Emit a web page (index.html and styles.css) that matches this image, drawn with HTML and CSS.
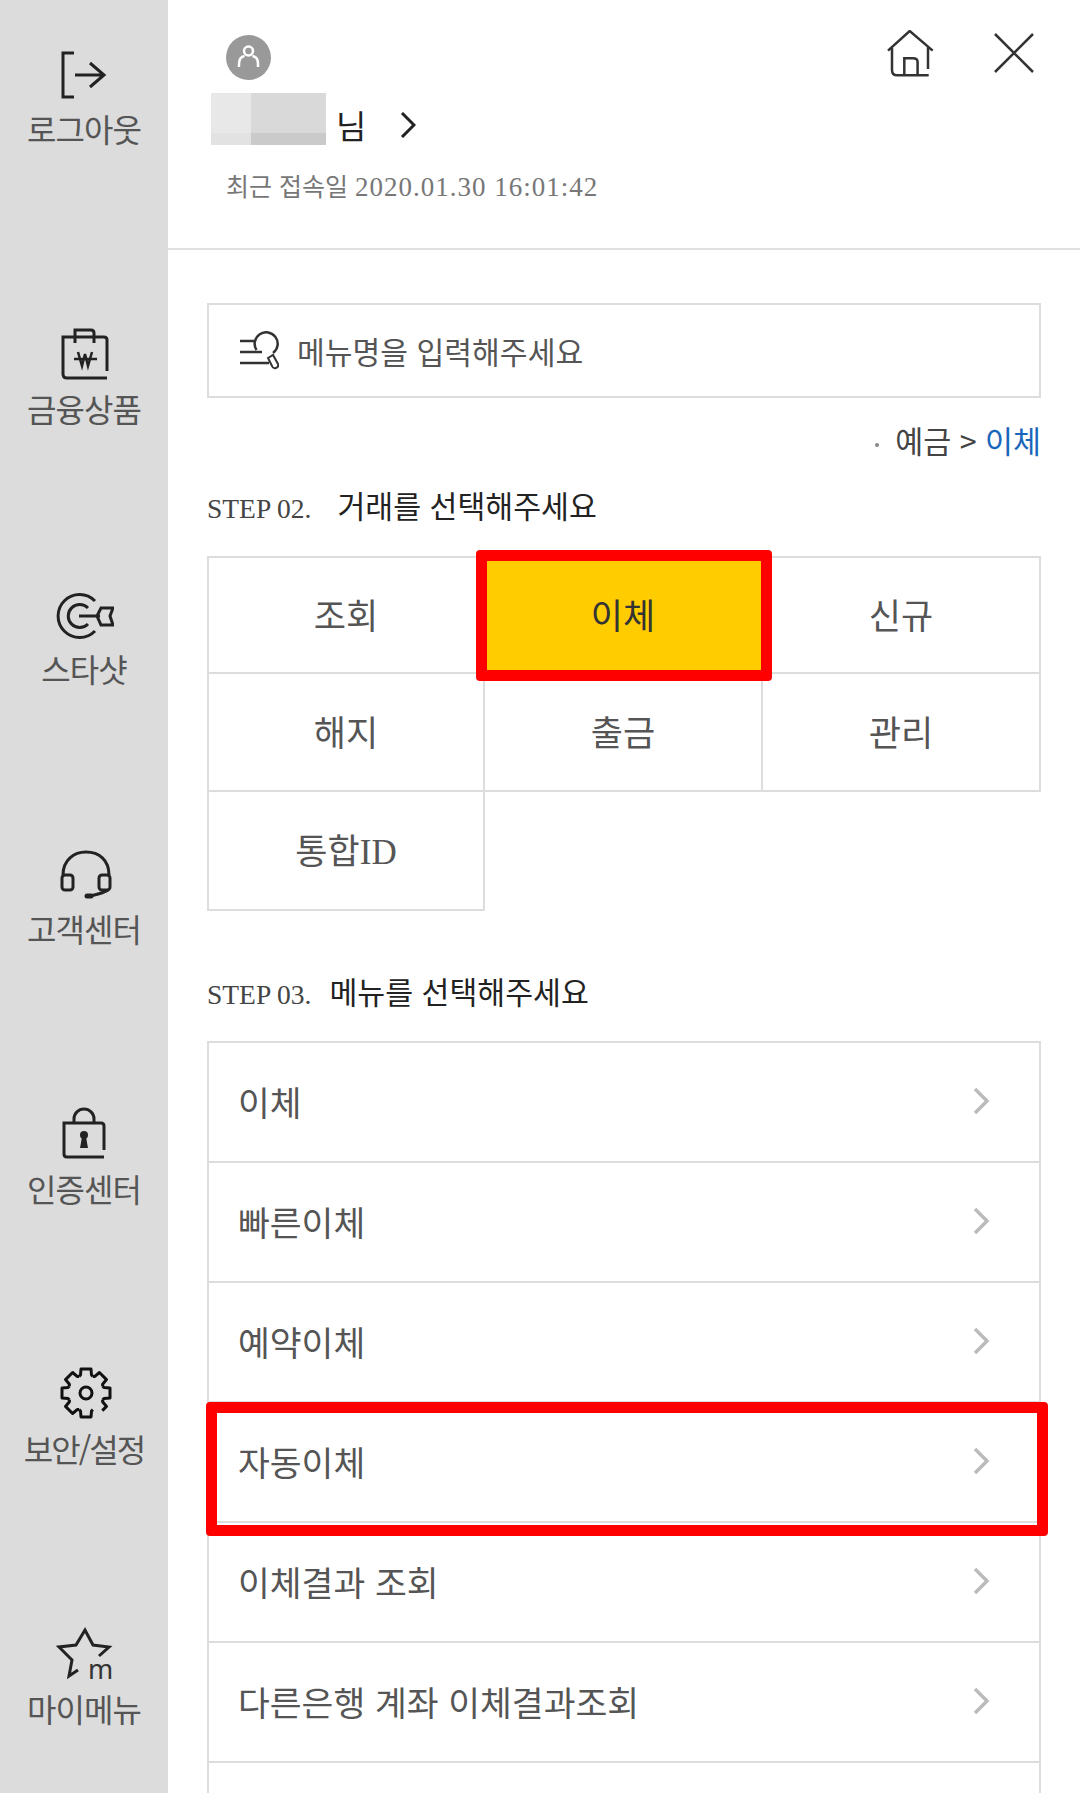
FILE: index.html
```html
<!DOCTYPE html>
<html lang="ko">
<head>
	<meta charset="utf-8">
	<title>전체메뉴</title>
	<link rel="stylesheet" href="styles.css">
</head>
<body>
<svg class="defs" width="0" height="0">
	<defs>
		<path id="chevron" d="M3 1 L15 13 L3 25"/>
		<path id="tooth" d="M-6.9 -16.6 L-5.5 -18 L-5 -24 H5 L5.5 -18 L6.9 -16.6"/>
	</defs>
</svg>
<div class="app">
	<nav class="side">
		<a class="side-item first">
			<svg class="side-icon" viewBox="0 0 60 60"><path d="M20 8 H9 V52 H20 M21 30 H50 M36 18 L50 30 L36 42"/></svg>
			<span>로그아웃</span>
		</a>
		<a class="side-item">
			<svg class="side-icon" viewBox="0 0 60 60"><path d="M53 46 V15 Q53 12 50 12 H9 V49 Q9 53 13 53 H53 M21 18 V5 H37 Q40 5 40 8 V18"/><path class="thin" d="M20 34 H43 M24 27 L28 41 L31 29 L34 41 L38 27"/></svg>
			<span>금융상품</span>
		</a>
		<a class="side-item">
			<svg class="side-icon" viewBox="0 0 60 60"><path d="M41 16 A21.5 21.5 0 1 0 41 46 M34 23 A11.5 11.5 0 1 0 34 39 M25 31 H46 M43 31 L47 23 H59 L56 31 L59 40 H47 Z"/></svg>
			<span>스타샷</span>
		</a>
		<a class="side-item">
			<svg class="side-icon" viewBox="0 0 60 60"><path d="M9 30 C9 15 20 7 32 7 C45 7 55 15 55 30"/><rect x="8" y="30" width="11" height="15" rx="3"/><rect x="45" y="30" width="11" height="15" rx="3"/><path d="M54 45 Q50 48 36 51"/><path class="thick" d="M33 51 H37"/></svg>
			<span>고객센터</span>
		</a>
		<a class="side-item">
			<svg class="side-icon" viewBox="0 0 60 60"><path d="M50 45 V21 Q50 18 47 18 H10 V49 Q10 52 13 52 H50 M20 18 V14 A10 10 0 0 1 40 14 V18"/><circle class="solid" cx="30" cy="30" r="4"/><path class="solid" d="M28 32 H32 L34 43 H26 Z"/></svg>
			<span>인증센터</span>
		</a>
		<a class="side-item">
			<svg class="side-icon gear" viewBox="0 0 60 60">
				<circle cx="32" cy="28" r="6"/>
				<g transform="translate(32 28)">
					<use href="#tooth"/>
					<use href="#tooth" transform="rotate(45)"/>
					<use href="#tooth" transform="rotate(90)"/>
					<path d="M-6.9 -16.6 L-5.5 -18 L-5 -24 H1" transform="rotate(135)"/>
					<use href="#tooth" transform="rotate(180)"/>
					<use href="#tooth" transform="rotate(225)"/>
					<use href="#tooth" transform="rotate(270)"/>
					<use href="#tooth" transform="rotate(315)"/>
				</g>
			</svg>
			<span class="tight">보안/설정</span>
		</a>
		<a class="side-item last">
			<svg class="side-icon" viewBox="0 0 60 60"><path d="M24 45 L15 51 L18 35 L5 22 L22 20 L31 5 L39 20 L55 22 L45 31"/><text x="34" y="54">m</text></svg>
			<span>마이메뉴</span>
		</a>
	</nav>

	<main class="main">
		<header class="top">
			<div class="user">
				<div class="avatar">
					<svg viewBox="0 0 45 45" width="45" height="45"><circle cx="22.5" cy="16" r="4.5"/><path d="M13 32 V29 Q13 22 18.5 21 M32 32 V29 Q32 22 26.5 21"/></svg>
				</div>
				<div class="name-row">
					<div class="name-blur">
						<i></i><i></i><i></i><i></i>
					</div>
					<span class="name-suffix">님</span>
					<svg class="name-arrow" viewBox="0 0 17 26" width="17" height="26"><use href="#chevron"/></svg>
				</div>
				<div class="last-login">최근 접속일 <span>2020.01.30 16:01:42</span></div>
			</div>
			<div class="top-icons">
				<svg class="home" viewBox="0 0 47 47" width="47" height="47"><path d="M1 20.6 L22.7 1 L45.7 20.6 M5 18 V40 Q5 45.3 10 45.3 H41.7 M41 17 V39 M17.3 45 V28.3 H26 Q30.6 28.3 30.6 32 V45"/></svg>
				<svg class="close" viewBox="0 0 40 40" width="40" height="40"><path d="M1 1 L39 39 M39 1 L1 39"/></svg>
			</div>
		</header>

		<div class="content">
			<div class="search">
				<svg viewBox="0 0 39 39" width="39" height="39"><path d="M0 10 H14 M0 21 H22 M0 32 H29"/><path d="M16.5 19 A11.5 11.5 0 1 1 33 22"/><path class="handle" d="M28 27 L33 24 L38 33 Q39 36 36 37 Q33 38 32 35 Z"/></svg>
				<span>메뉴명을 입력해주세요</span>
			</div>

			<div class="crumb"><span class="crumb-dot"></span>예금 &gt; <b>이체</b></div>

			<h2 class="step step-2"><span class="step-no">STEP 02.</span>거래를 선택해주세요</h2>
			<div class="deal-grid">
				<div class="deal">조회</div>
				<div class="deal on">이체</div>
				<div class="deal">신규</div>
				<div class="deal">해지</div>
				<div class="deal">출금</div>
				<div class="deal">관리</div>
				<div class="deal serif">통합ID</div>
			</div>

			<h2 class="step step-3"><span class="step-no">STEP 03.</span>메뉴를 선택해주세요</h2>
			<ul class="menu">
				<li>이체<svg viewBox="0 0 17 26" width="17" height="26"><use href="#chevron"/></svg></li>
				<li>빠른이체<svg viewBox="0 0 17 26" width="17" height="26"><use href="#chevron"/></svg></li>
				<li>예약이체<svg viewBox="0 0 17 26" width="17" height="26"><use href="#chevron"/></svg></li>
				<li class="on">자동이체<svg viewBox="0 0 17 26" width="17" height="26"><use href="#chevron"/></svg></li>
				<li>이체결과 조회<svg viewBox="0 0 17 26" width="17" height="26"><use href="#chevron"/></svg></li>
				<li>다른은행 계좌 이체결과조회<svg viewBox="0 0 17 26" width="17" height="26"><use href="#chevron"/></svg></li>
				<li class="cut"></li>
			</ul>
		</div>
	</main>
</div>
</body>
</html>
```

FILE: styles.css
```css
html, body {
	margin: 0;
	height: 1793px;
	overflow: hidden;
	background: #fff;
}

body {
	font-family: "Noto Sans CJK KR", "Noto Sans", sans-serif;
	color: #555;
}

.defs {
	display: block;
	height: 0;
}

.app {
	display: flex;
	height: 1793px;
}

/* left rail */
.side {
	flex: none;
	width: 168px;
	box-sizing: border-box;
	padding-top: 45px;
	background: #dcdcdc;
}

.side-item {
	display: flex;
	flex-direction: column;
	align-items: center;
	height: 260px;
}

.side-item.first {
	margin-bottom: 20px;
}

.side-item.last {
	height: 120px;
}

.side-item span {
	margin-top: 3px;
	font-size: 32px;
	line-height: 40px;
	letter-spacing: -1px;
	color: #555;
	white-space: nowrap;
}

.side-item span.tight {
	letter-spacing: -2px;
}

.side-icon {
	display: block;
	width: 60px;
	height: 60px;
	fill: none;
	stroke: #222;
	stroke-width: 3;
}

.side-icon .thin {
	stroke-width: 2.5;
}

.side-icon .thick {
	stroke-width: 5;
	stroke-linecap: round;
}

.side-icon .solid {
	fill: #222;
	stroke: none;
}

.side-icon text {
	font-family: "Noto Sans", sans-serif;
	font-size: 27px;
	fill: #333;
	stroke: none;
}

.gear {
	stroke: #111;
	stroke-linejoin: round;
}

/* right part */
.main {
	flex: 1;
	min-width: 0;
}

.top {
	display: flex;
	justify-content: space-between;
	height: 248px;
	border-bottom: 2px solid #e0e0e0;
}

.user {
	padding-top: 35px;
}

.avatar {
	width: 45px;
	height: 45px;
	margin-left: 58px;
	border-radius: 50%;
	background: #999;
}

.avatar svg {
	display: block;
	fill: none;
	stroke: #fff;
	stroke-width: 2.5;
}

.name-row {
	display: flex;
	align-items: center;
	margin: 13px 0 0 43px;
	height: 52px;
}

.name-blur {
	display: grid;
	grid-template-columns: 40px 75px;
	grid-template-rows: 40px 12px;
	width: 115px;
	height: 52px;
}

.name-blur i:nth-child(1) { background: #e8e8e8; }
.name-blur i:nth-child(2) { background: #d9d9d9; }
.name-blur i:nth-child(3) { background: #e2e2e2; }
.name-blur i:nth-child(4) { background: #cacaca; }

.name-suffix {
	margin: 12px 0 0 10px;
	font-size: 33px;
	line-height: 46px;
	color: #222;
}

.name-arrow {
	margin: 12px 0 0 33px;
	fill: none;
	stroke: #222;
	stroke-width: 3;
}

.last-login {
	display: flex;
	align-items: baseline;
	gap: 7px;
	height: 40px;
	margin: 20px 0 0 58px;
	font-size: 25px;
	line-height: 40px;
	color: #777;
	white-space: nowrap;
}

.last-login span {
	font-family: "Liberation Serif", serif;
	font-size: 27px;
	letter-spacing: 1px;
}

.top-icons {
	display: flex;
	align-items: flex-start;
	gap: 60px;
	padding: 30px 46px 0 0;
}

.top-icons svg {
	fill: none;
	stroke: #333;
	stroke-width: 2.5;
}

.close {
	margin-top: 3px;
}

.content {
	padding: 53px 39px 0;
}

.search {
	display: flex;
	align-items: center;
	gap: 18px;
	box-sizing: border-box;
	height: 95px;
	padding-left: 31px;
	border: 2px solid #ddd;
	font-size: 30.2px;
	color: #555;
}

.search svg {
	fill: none;
	stroke: #333;
	stroke-width: 2.5;
}

.search .handle {
	stroke-width: 2;
}

.crumb {
	height: 40px;
	margin-top: 22px;
	font-size: 30.4px;
	line-height: 40px;
	text-align: right;
	color: #444;
}

.crumb b {
	font-weight: 400;
	color: #1a66bb;
}

.crumb-dot {
	display: inline-block;
	width: 4px;
	height: 4px;
	margin-right: 16px;
	vertical-align: middle;
	border-radius: 50%;
	background: #888;
}

.step {
	display: flex;
	align-items: baseline;
	height: 40px;
	margin: 25px 0 0;
	font-size: 30.3px;
	font-weight: 400;
	line-height: 40px;
	color: #222;
}

.step-no {
	font-family: "Liberation Serif", serif;
	font-size: 27.5px;
	color: #444;
}

.step-2 {
	margin-bottom: 31px;
}

.step-2 .step-no {
	margin-right: 26px;
}

.step-3 {
	margin-top: 60px;
	margin-bottom: 30px;
}

.step-3 .step-no {
	margin-right: 18px;
}

.deal-grid {
	display: grid;
	grid-template-columns: 276px 278px 278px;
	grid-template-rows: 116px 118px 119px;
	border-top: 2px solid #ddd;
	border-left: 2px solid #ddd;
}

.deal {
	position: relative;
	display: flex;
	align-items: center;
	justify-content: center;
	padding-bottom: 4px;
	border-right: 2px solid #ddd;
	border-bottom: 2px solid #ddd;
	font-size: 35px;
	color: #555;
}

.deal.serif {
	font-family: "Liberation Serif", "Noto Sans CJK KR", serif;
}

.deal.on {
	background: #ffcc00;
	color: #333;
}

.deal.on::after {
	content: "";
	position: absolute;
	z-index: 1;
	top: -8px;
	right: -11px;
	bottom: -9px;
	left: -9px;
	border: 11px solid #f00;
	border-radius: 4px;
}

.menu {
	margin: 0;
	padding: 0;
	list-style: none;
	border: 2px solid #ddd;
	border-bottom: 0;
}

.menu li {
	position: relative;
	display: flex;
	align-items: center;
	justify-content: space-between;
	box-sizing: border-box;
	height: 120px;
	padding: 0 50px 2px 29px;
	border-bottom: 2px solid #ddd;
	font-size: 34.6px;
	color: #555;
	white-space: nowrap;
}

.menu li.cut {
	height: 30px;
	border-bottom: 0;
}

.menu li svg {
	fill: none;
	stroke: #bbb;
	stroke-width: 3.5;
}

.menu li.on::after {
	content: "";
	position: absolute;
	z-index: 1;
	top: -1px;
	right: -9px;
	bottom: -15px;
	left: -3px;
	border: 11px solid #f00;
	border-radius: 4px;
}
```
